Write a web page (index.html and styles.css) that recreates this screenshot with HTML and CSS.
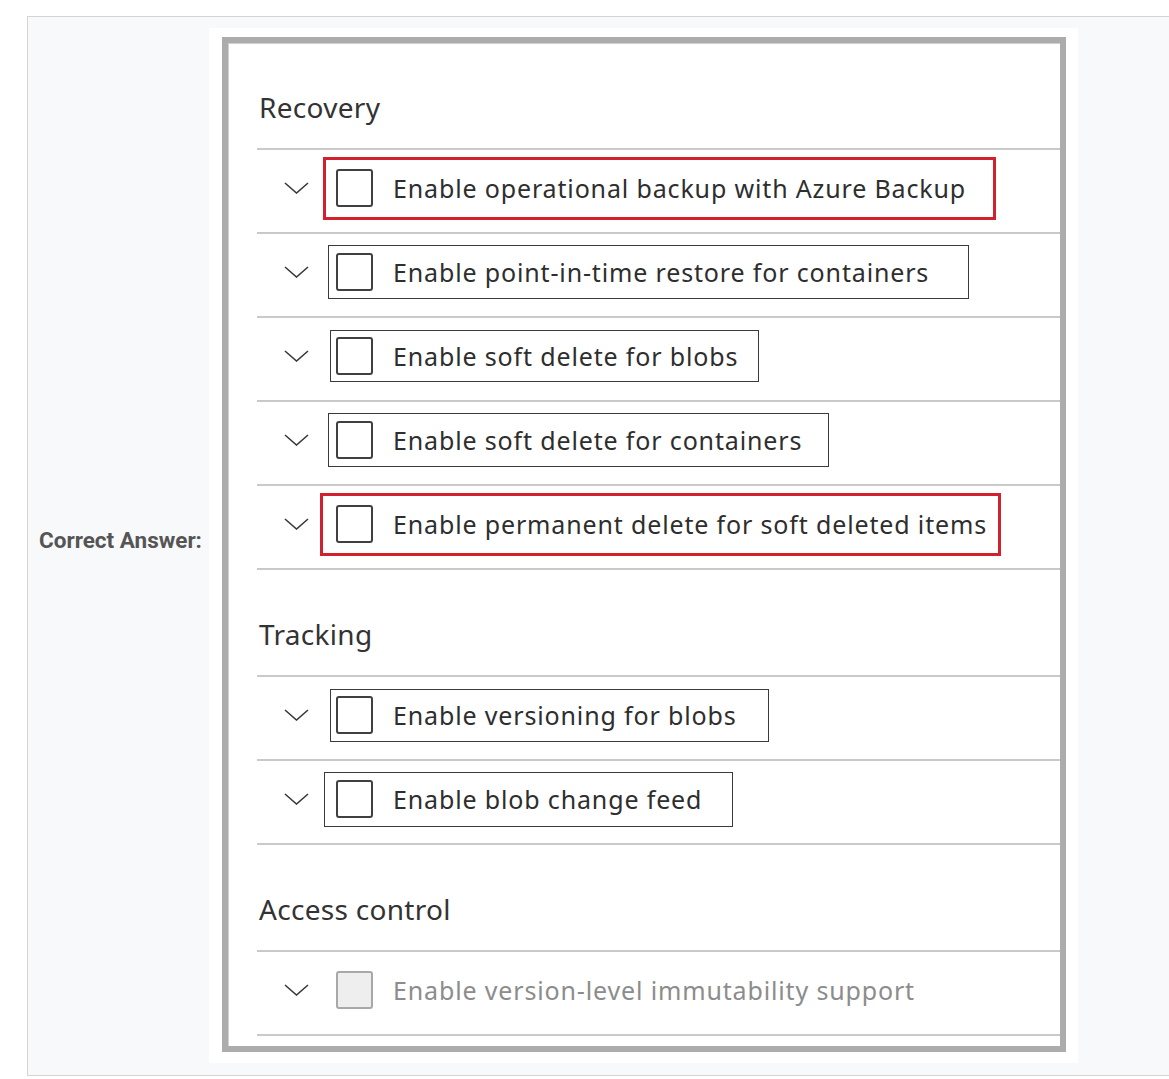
FILE: index.html
```html
<!DOCTYPE html>
<html>
<head>
<meta charset="utf-8">
<link rel="stylesheet" href="styles.css">
</head>
<body>
<div class="answer">
  <div class="label-cell"><span class="label">Correct Answer:</span></div>
  <div class="shot">
    <div class="frame">
      <div class="heading">Recovery</div>
      <div class="section">
        <div class="row">
          <svg class="chev" viewBox="0 0 25 12"><polyline points="1,1 12.5,11 24,1"/></svg>
          <div class="box red r1"><span class="cb"></span><span class="txt">Enable operational backup with Azure Backup</span></div>
        </div>
        <div class="row">
          <svg class="chev" viewBox="0 0 25 12"><polyline points="1,1 12.5,11 24,1"/></svg>
          <div class="box r2"><span class="cb"></span><span class="txt">Enable point-in-time restore for containers</span></div>
        </div>
        <div class="row">
          <svg class="chev" viewBox="0 0 25 12"><polyline points="1,1 12.5,11 24,1"/></svg>
          <div class="box r3"><span class="cb"></span><span class="txt">Enable soft delete for blobs</span></div>
        </div>
        <div class="row">
          <svg class="chev" viewBox="0 0 25 12"><polyline points="1,1 12.5,11 24,1"/></svg>
          <div class="box r4"><span class="cb"></span><span class="txt">Enable soft delete for containers</span></div>
        </div>
        <div class="row">
          <svg class="chev" viewBox="0 0 25 12"><polyline points="1,1 12.5,11 24,1"/></svg>
          <div class="box red r5"><span class="cb"></span><span class="txt">Enable permanent delete for soft deleted items</span></div>
        </div>
      </div>
      <div class="heading">Tracking</div>
      <div class="section">
        <div class="row">
          <svg class="chev" viewBox="0 0 25 12"><polyline points="1,1 12.5,11 24,1"/></svg>
          <div class="box r6"><span class="cb"></span><span class="txt">Enable versioning for blobs</span></div>
        </div>
        <div class="row">
          <svg class="chev" viewBox="0 0 25 12"><polyline points="1,1 12.5,11 24,1"/></svg>
          <div class="box r7"><span class="cb"></span><span class="txt">Enable blob change feed</span></div>
        </div>
      </div>
      <div class="heading">Access control</div>
      <div class="section">
        <div class="row">
          <svg class="chev" viewBox="0 0 25 12"><polyline points="1,1 12.5,11 24,1"/></svg>
          <div class="plain disabled"><span class="cb"></span><span class="txt">Enable version-level immutability support</span></div>
        </div>
      </div>
    </div>
  </div>
</div>
</body>
</html>
```
FILE: styles.css
```css
html, body {
  margin: 0;
  padding: 0;
  overflow: hidden;
  background: #ffffff;
}
body {
  font-family: "Noto Sans", "Open Sans", sans-serif;
}
.answer {
  margin: 16px 0 0 27px;
  width: 1160px;
  height: 1058px;
  border: 1px solid #d4d4d4;
  background: #f8f9fa;
  display: flex;
}
.label-cell {
  width: 170px;
  padding-left: 11px;
  padding-bottom: 12px;
  display: flex;
  align-items: center;
}
.label {
  font-family: Roboto, "Liberation Sans", sans-serif;
  font-weight: 700;
  font-size: 22.5px;
  color: #555555;
  white-space: nowrap;
}
.shot {
  margin-top: 11px;
  width: 869px;
  height: 1035px;
  box-sizing: border-box;
  padding: 9px 12px 11px 13px;
  background: #ffffff;
}
.frame {
  box-sizing: border-box;
  width: 844px;
  height: 1015px;
  border: 6px solid #acacac;
  box-shadow: inset 1px 1px 0 #d0d0d0;
  padding-left: 29px;
}
.heading {
  height: 32px;
  line-height: 32px;
  padding: 48px 0 25px 2px;
  font-size: 28px;
  letter-spacing: 0.3px;
  color: #333333;
}
.section {
  border-bottom: 2px solid #c9c9c9;
}
.row {
  box-sizing: border-box;
  height: 84px;
  border-top: 2px solid #c9c9c9;
  padding: 0 0 6px 27px;
  display: flex;
  align-items: center;
}
.chev {
  width: 25px;
  height: 12px;
  flex: none;
}
.chev polyline {
  fill: none;
  stroke: #3a3a3a;
  stroke-width: 1.6;
}
.box, .plain {
  box-sizing: border-box;
  display: flex;
  align-items: center;
  border: 1px solid #3a3a3a;
  flex: none;
}
.box.red {
  border: 3px solid #d3202f;
}
.r1 { margin-left: 14px; padding-left: 10px; width: 673px; height: 63px; }
.r2 { margin-left: 19px; padding-left: 7px; width: 641px; height: 54px; }
.r3 { margin-left: 21px; padding-left: 5px; width: 429px; height: 52px; }
.r4 { margin-left: 19px; padding-left: 7px; width: 501px; height: 54px; }
.r5 { margin-left: 11px; padding-left: 13px; width: 681px; height: 63px; }
.r6 { margin-left: 21px; padding-left: 5px; width: 439px; height: 53px; }
.r7 { margin-left: 15px; padding-left: 11px; width: 409px; height: 55px; }
.plain {
  border: none;
  margin-left: 27px;
  height: 54px;
}
.cb {
  box-sizing: border-box;
  width: 37px;
  height: 38px;
  border: 2px solid #404040;
  border-radius: 3px;
  background: #ffffff;
  flex: none;
}
.txt {
  margin-left: 20px;
  font-size: 25px;
  letter-spacing: 0.85px;
  color: #2e2e2e;
  white-space: nowrap;
}
.disabled .cb {
  border-color: #a8a8a8;
  background: #eeeeee;
}
.disabled .txt {
  color: #8c8c8c;
}
```
